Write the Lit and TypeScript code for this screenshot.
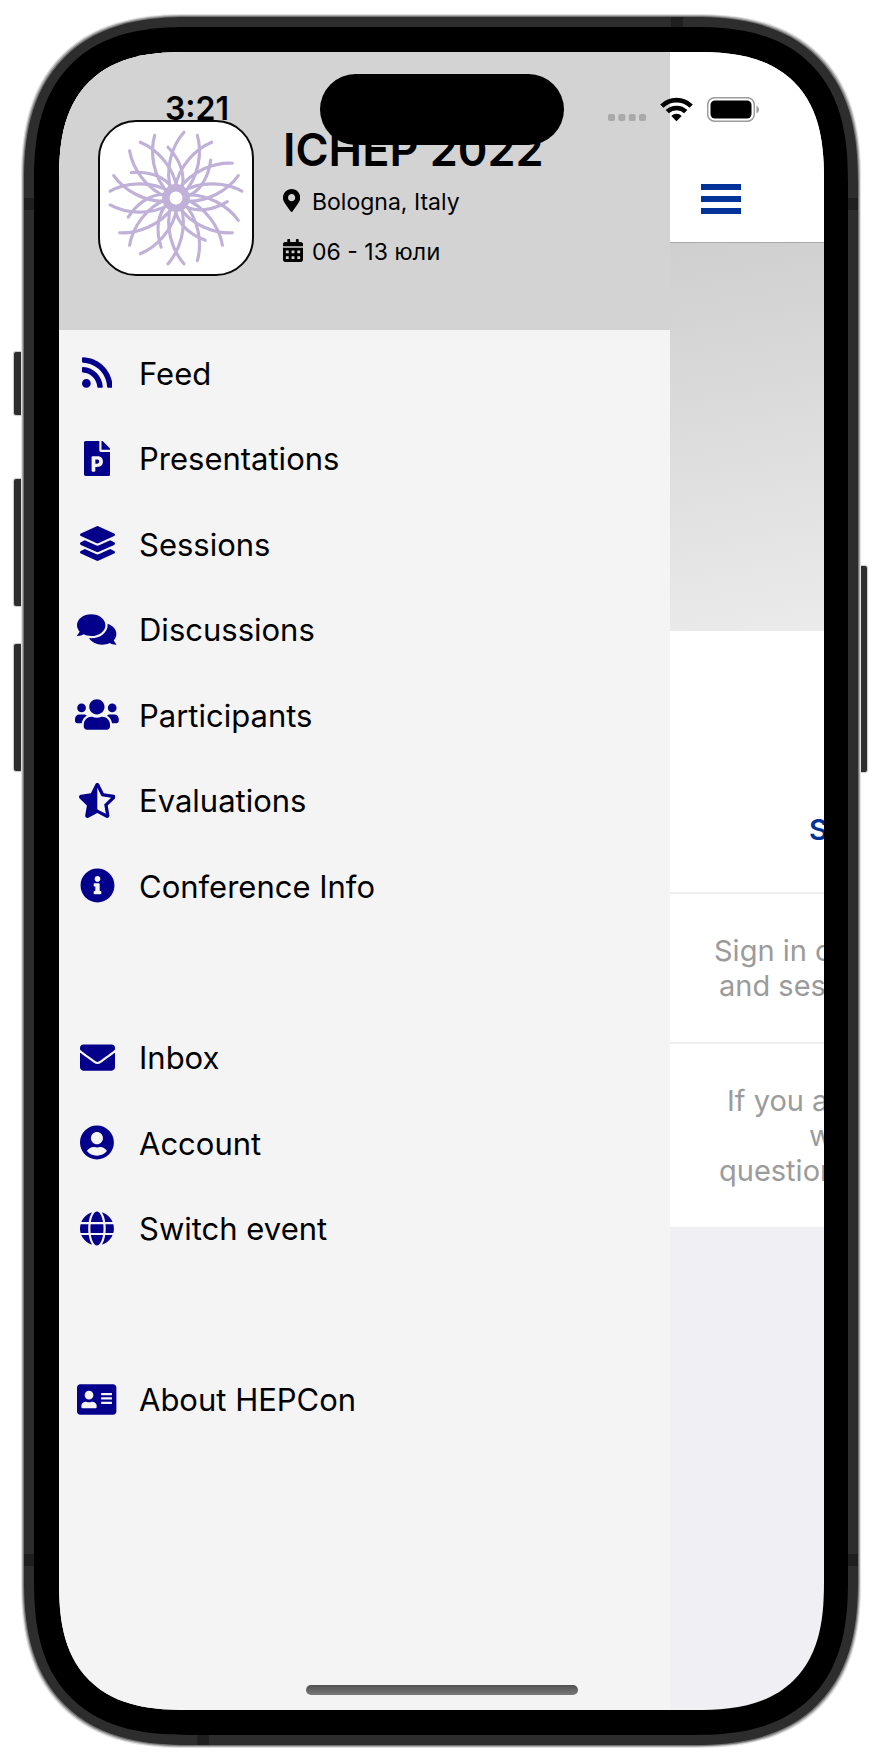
import { LitElement, html, css, svg } from "lit";
import { customElement } from "lit/decorators.js";

interface Icon {
  width: number;
  path: string;
}

const icons: Record<string, Icon> = {
  rss: {
    width: 448,
    path: "M128.081 415.959c0 35.369-28.672 64.041-64.041 64.041S0 451.328 0 415.959s28.672-64.041 64.041-64.041 64.04 28.673 64.04 64.041zm175.66 47.25c-8.354-154.6-132.185-278.587-286.95-286.95C7.656 175.765 0 183.105 0 192.253v48.069c0 8.415 6.49 15.472 14.887 16.018 111.832 7.284 201.473 96.702 208.772 208.772.547 8.397 7.604 14.887 16.018 14.887h48.069c9.149.001 16.489-7.655 15.995-16.79zm144.249.288C439.596 229.677 251.465 40.445 16.503 32.01 7.473 31.686 0 38.981 0 48.016v48.068c0 8.625 6.835 15.645 15.453 15.999 191.179 7.839 344.627 161.316 352.465 352.465.353 8.618 7.373 15.453 15.999 15.453h48.068c9.034-.001 16.329-7.474 16.005-16.504z",
  },
  slides: {
    width: 384,
    path: "M193.7 271.2c8.8 0 15.5 2.7 20.3 8.1 9.6 10.9 9.8 32.7-.2 44.1-4.9 5.6-11.9 8.5-21.1 8.5h-26.9v-60.7h27.9zM377 105L279 7c-4.5-4.5-10.6-7-17-7h-6v128h128v-6.1c0-6.3-2.5-12.4-7-16.9zm-153 31V0H24C10.7 0 0 10.7 0 24v464c0 13.3 10.7 24 24 24h336c13.3 0 24-10.7 24-24V160H248c-13.2 0-24-10.8-24-24zm53 165.2c0 90.3-88.8 77.6-111.1 77.6V436c0 6.6-5.4 12-12 12h-30.8c-6.6 0-12-5.4-12-12V236.2c0-6.6 5.4-12 12-12h81c44.5 0 72.9 32.8 72.9 77z",
  },
  layers: {
    width: 512,
    path: "M12.41 148.02l232.94 105.67c6.8 3.09 14.49 3.09 21.29 0l232.94-105.67c16.55-7.51 16.55-32.52 0-40.03L266.65 2.31a25.607 25.607 0 0 0-21.29 0L12.41 107.98c-16.55 7.51-16.55 32.53 0 40.04zm487.18 88.28l-58.09-26.33-161.64 73.27c-7.56 3.43-15.59 5.17-23.86 5.17s-16.29-1.74-23.86-5.17L70.51 209.97l-58.1 26.33c-16.55 7.5-16.55 32.5 0 40l232.94 105.59c6.8 3.08 14.49 3.08 21.29 0L499.59 276.3c16.55-7.5 16.55-32.5 0-40zm0 127.8l-57.87-26.23-161.86 73.37c-7.56 3.43-15.59 5.17-23.86 5.17s-16.29-1.74-23.86-5.17L70.29 337.87 12.41 364.1c-16.55 7.5-16.55 32.5 0 40l232.94 105.59c6.8 3.08 14.49 3.08 21.29 0L499.59 404.1c16.55-7.5 16.55-32.5 0-40z",
  },
  comments: {
    width: 576,
    path: "M416 192c0-88.4-93.1-160-208-160S0 103.6 0 192c0 34.3 14.1 65.9 38 92-13.4 30.2-35.5 54.2-35.8 54.5-2.2 2.3-2.8 5.7-1.5 8.7S4.8 352 8 352c36.6 0 66.9-12.3 88.7-25 32.2 15.7 70.3 25 111.3 25 114.9 0 208-71.6 208-160zm122 220c23.9-26 38-57.7 38-92 0-66.9-53.5-124.2-129.3-148.1.9 6.6 1.3 13.3 1.3 20.1 0 105.9-107.7 192-240 192-10.8 0-21.3-.8-31.7-1.9C207.8 439.6 281.8 480 368 480c41 0 79.1-9.2 111.3-25 21.8 12.7 52.1 25 88.7 25 3.2 0 6.1-1.9 7.3-4.8 1.3-2.9.7-6.3-1.5-8.7-.3-.3-22.4-24.2-35.8-54.5z",
  },
  users: {
    width: 640,
    path: "M96 224c35.3 0 64-28.7 64-64s-28.7-64-64-64-64 28.7-64 64 28.7 64 64 64zm448 0c35.3 0 64-28.7 64-64s-28.7-64-64-64-64 28.7-64 64 28.7 64 64 64zm32 32h-64c-17.6 0-33.5 7.1-45.1 18.6 40.3 22.1 68.9 62 75.1 109.4h66c17.7 0 32-14.3 32-32v-32c0-35.3-28.7-64-64-64zm-256 0c61.9 0 112-50.1 112-112S381.9 32 320 32 208 82.1 208 144s50.1 112 112 112zm76.8 32h-8.3c-20.8 10-43.9 16-68.5 16s-47.6-6-68.5-16h-8.3C179.6 288 128 339.6 128 403.2V432c0 26.5 21.5 48 48 48h288c26.5 0 48-21.5 48-48v-28.8c0-63.6-51.6-115.2-115.2-115.2zm-223.7-13.4C161.5 263.1 145.6 256 128 256H64c-35.3 0-64 28.7-64 64v32c0 17.7 14.3 32 32 32h65.9c6.3-47.4 34.9-87.3 75.2-109.4z",
  },
  star: {
    width: 536,
    path: "M508.55 171.51L362.18 150.2 296.77 17.81C290.89 5.98 279.42 0 267.95 0c-11.4 0-22.79 5.9-28.69 17.81l-65.43 132.38-146.38 21.29c-26.25 3.8-36.77 36.09-17.74 54.59l105.89 103-25.06 145.48C86.98 495.33 103.57 512 122.15 512c4.93 0 10-1.17 14.87-3.75l130.95-68.68 130.94 68.7c4.86 2.55 9.92 3.71 14.83 3.71 18.6 0 35.22-16.61 31.66-37.4l-25.03-145.49 105.91-102.98c19.04-18.5 8.52-50.8-17.73-54.6zm-121.74 123.2l-18.12 17.62 4.28 24.88 19.52 113.45-102.13-53.59-22.38-11.74.03-317.19 51.03 103.29 11.18 22.63 25.01 3.64 114.23 16.63-82.65 80.38z",
  },
  info: {
    width: 512,
    path: "M256 8C119.043 8 8 119.083 8 256c0 136.997 111.043 248 248 248s248-111.003 248-248C504 119.083 392.957 8 256 8zm0 110c23.196 0 42 18.804 42 42s-18.804 42-42 42-42-18.804-42-42 18.804-42 42-42zm56 254c0 6.627-5.373 12-12 12h-88c-6.627 0-12-5.373-12-12v-24c0-6.627 5.373-12 12-12h12v-64h-12c-6.627 0-12-5.373-12-12v-24c0-6.627 5.373-12 12-12h64c6.627 0 12 5.373 12 12v100h12c6.627 0 12 5.373 12 12v24z",
  },
  envelope: {
    width: 512,
    path: "M502.3 190.8c3.9-3.1 9.7-.2 9.7 4.7V400c0 26.5-21.5 48-48 48H48c-26.5 0-48-21.5-48-48V195.6c0-5 5.7-7.8 9.7-4.7 22.4 17.4 52.1 39.5 154.1 113.6 21.1 15.4 56.7 47.8 92.2 47.6 35.7.3 72-32.8 92.3-47.6 102-74.1 131.6-96.3 154-113.7zM256 320c23.2.4 56.6-29.2 73.4-41.4 132.7-96.3 142.8-104.7 173.4-128.7 5.8-4.5 9.2-11.5 9.2-18.9v-19c0-26.5-21.5-48-48-48H48c-26.5 0-48 21.5-48 48v19c0 7.4 3.4 14.3 9.2 18.9 30.6 23.9 40.7 32.4 173.4 128.7 16.8 12.2 50.2 41.8 73.4 41.4z",
  },
  account: {
    width: 496,
    path: "M248 8C111 8 0 119 0 256s111 248 248 248 248-111 248-248S385 8 248 8zm0 96c48.6 0 88 39.4 88 88s-39.4 88-88 88-88-39.4-88-88 39.4-88 88-88zm0 344c-58.7 0-111.3-26.6-146.5-68.2 18.8-35.4 55.6-59.8 98.5-59.8 2.4 0 4.8.4 7.1 1.1 13 4.2 26.6 6.9 40.9 6.9 14.3 0 28-2.7 40.9-6.9 2.3-.7 4.7-1.1 7.1-1.1 42.9 0 79.7 24.4 98.5 59.8C359.3 421.4 306.7 448 248 448z",
  },
  globe: {
    width: 496,
    path: "M336.5 160C322 70.7 287.8 8 248 8s-74 62.7-88.5 152h177zM152 256c0 22.2 1.2 43.5 3.3 64h185.3c2.1-20.5 3.3-41.8 3.3-64s-1.2-43.5-3.3-64H155.3c-2.1 20.5-3.3 41.8-3.3 64zm324.7-96c-28.6-67.9-86.5-120.4-158-141.6 24.4 33.8 41.2 84.7 50 141.6h108zM177.2 18.4C105.8 39.6 47.8 92.1 19.3 160h108c8.7-56.9 25.5-107.8 49.9-141.6zM487.4 192H372.7c2.1 21 3.3 42.5 3.3 64s-1.2 43-3.3 64h114.6c5.5-20.5 8.6-41.8 8.6-64s-3.1-43.5-8.5-64zM120 256c0-21.5 1.2-43 3.3-64H8.6C3.2 212.5 0 233.8 0 256s3.2 43.5 8.6 64h114.6c-2-21-3.2-42.5-3.2-64zm39.5 96c14.5 89.3 48.7 152 88.5 152s74-62.7 88.5-152h-177zm159.3 141.6c71.4-21.2 129.4-73.7 158-141.6h-108c-8.8 56.9-25.6 107.8-50 141.6zM19.3 352c28.6 67.9 86.5 120.4 158 141.6-24.4-33.8-41.2-84.7-50-141.6h-108z",
  },
  card: {
    width: 576,
    path: "M528 32H48C21.5 32 0 53.5 0 80v352c0 26.5 21.5 48 48 48h480c26.5 0 48-21.5 48-48V80c0-26.5-21.5-48-48-48zm-352 96c35.3 0 64 28.7 64 64s-28.7 64-64 64-64-28.7-64-64 28.7-64 64-64zm112 236.8c0 10.6-10 19.2-22.4 19.2H86.4C74 384 64 375.4 64 364.8v-19.2c0-31.8 30.1-57.6 67.2-57.6h5c12.3 5.1 25.7 8 39.8 8s27.6-2.9 39.8-8h5c37.1 0 67.2 25.8 67.2 57.6v19.2zM512 312c0 4.4-3.6 8-8 8H360c-4.4 0-8-3.6-8-8v-16c0-4.4 3.6-8 8-8h144c4.4 0 8 3.6 8 8v16zm0-64c0 4.4-3.6 8-8 8H360c-4.4 0-8-3.6-8-8v-16c0-4.4 3.6-8 8-8h144c4.4 0 8 3.6 8 8v16zm0-64c0 4.4-3.6 8-8 8H360c-4.4 0-8-3.6-8-8v-16c0-4.4 3.6-8 8-8h144c4.4 0 8 3.6 8 8v16z",
  },
  pin: {
    width: 384,
    path: "M172.268 501.67C26.97 291.031 0 269.413 0 192 0 85.961 85.961 0 192 0s192 85.961 192 192c0 77.413-26.97 99.031-172.268 309.67-9.535 13.774-29.93 13.773-39.464 0zM192 272c44.183 0 80-35.817 80-80s-35.817-80-80-80-80 35.817-80 80 35.817 80 80 80z",
  },
  calendar: {
    width: 448,
    path: "M0 464c0 26.500 21.500 48 48 48h352c26.500 0 48-21.500 48-48V192H0zM64 256h64v64H64zM192 256h64v64h-64zM320 256h64v64h-64zM64 384h64v64H64zM192 384h64v64h-64zM320 384h64v64h-64zM448 160v-48c0-26.500-21.500-48-48-48h-48V16c0-8.800-7.200-16-16-16h-32c-8.800 0-16 7.200-16 16v48H160V16c0-8.800-7.200-16-16-16h-32c-8.800 0-16 7.200-16 16v48H48C21.500 64 0 85.500 0 112v48z",
  },
};

const drawIcon = (name: string) => {
  const icon = icons[name];
  return html`<svg class="icon" viewBox="0 0 ${icon.width} 512" aria-hidden="true">
    <path fill-rule="evenodd" d=${icon.path} />
  </svg>`;
};

const menuGroups: { icon: string; label: string }[][] = [
  [
    { icon: "rss", label: "Feed" },
    { icon: "slides", label: "Presentations" },
    { icon: "layers", label: "Sessions" },
    { icon: "comments", label: "Discussions" },
    { icon: "users", label: "Participants" },
    { icon: "star", label: "Evaluations" },
    { icon: "info", label: "Conference Info" },
  ],
  [
    { icon: "envelope", label: "Inbox" },
    { icon: "account", label: "Account" },
    { icon: "globe", label: "Switch event" },
  ],
  [{ icon: "card", label: "About HEPCon" }],
];

// Fourteen pairs of tracks around the centre; every second inner track is short.
const tracks = Array.from({ length: 14 }, (_, i) => {
  const angle = (i * 360) / 14;
  const inner =
    i % 2 === 0
      ? "M-24-153C8-120 34-70 14-20"
      : "M-24-198C10-160 36-90 14-20";
  return svg`<g transform="rotate(${angle})">
    <path d="M24-198C-10-160-36-90-14-20" />
    <path d=${inner} />
  </g>`;
});

@customElement("app-root")
export class AppRoot extends LitElement {
  static styles = css`
    :host {
      display: flex;
      isolation: isolate;
      box-sizing: border-box;
      min-height: 100vh;
      padding: 17px 24px 7px;
      background: #fff;
      color: #000;
      font-family: Inter, Roboto, sans-serif;
    }
    * {
      box-sizing: border-box;
    }
    .device {
      position: relative;
      flex: 1;
      min-width: 0;
      display: flex;
      padding: 10px;
      background: #2d2d2d;
      border-radius: 135px;
      box-shadow: 0 0 0 1px #747474, 0 0 0 2px #ababab, 0 0 0 3px #e0e0e0;
    }
    .bezel {
      position: relative;
      flex: 1;
      min-width: 0;
      display: flex;
      padding: 25px 24px 25px 25px;
      background: #000;
      border-radius: 126px;
    }
    .screen {
      position: relative;
      flex: 1;
      min-width: 0;
      display: flex;
      overflow: hidden;
      background: #efeff4;
      border-radius: 102px;
    }
    @supports (corner-shape: superellipse(1.4)) {
      .device {
        border-radius: 165px;
        corner-shape: superellipse(1.3);
      }
      .bezel {
        border-radius: 155px;
        corner-shape: superellipse(1.34);
      }
      .screen {
        border-radius: 130px;
        corner-shape: superellipse(1.4);
      }
    }

    /* side keys and antenna bands of the phone */
    .key {
      position: absolute;
      width: 12px;
      background: #2d2d2d;
      border-radius: 2px;
      box-shadow: 0 0 1px 1px #c8c8c8;
      z-index: -1;
    }
    .key.left {
      left: -10px;
    }
    .key.right {
      right: -9px;
      top: 549px;
      height: 206px;
    }
    .key.action {
      top: 335px;
      height: 63px;
    }
    .key.up {
      top: 462px;
      height: 127px;
    }
    .key.down {
      top: 627px;
      height: 127px;
    }
    .band {
      position: absolute;
      width: 10px;
      height: 12px;
      background: #1f1f1f;
    }
    .band.west {
      left: 0;
    }
    .band.east {
      right: 0;
    }
    .band.high {
      top: 181px;
    }
    .band.low {
      bottom: 179px;
    }
    .band.north {
      top: 0;
      right: 175px;
      width: 12px;
      height: 10px;
    }
    .band.south {
      bottom: 0;
      left: 173px;
      width: 12px;
      height: 10px;
    }

    .status {
      position: absolute;
      inset: 0 0 auto;
      z-index: 1;
      height: 114px;
      padding: 0 64px 0 106px;
      display: flex;
      align-items: center;
      justify-content: space-between;
      pointer-events: none;
    }
    .clock {
      font-size: 32px;
      line-height: 38px;
      font-weight: 600;
    }
    .signals {
      display: flex;
      align-items: center;
      gap: 14px;
    }
    .signals svg {
      display: block;
    }
    .island {
      position: absolute;
      z-index: 3;
      top: 22px;
      left: 50%;
      width: 244px;
      height: 71px;
      margin-left: -122px;
      border-radius: 36px;
      background: #000;
    }
    .home {
      position: absolute;
      z-index: 3;
      bottom: 15px;
      left: 50%;
      width: 272px;
      height: 10px;
      margin-left: -136px;
      border-radius: 5px;
      background: linear-gradient(#505050, #7a7a7a);
    }

    .drawer {
      flex: 0 0 calc(80% - 1px);
      min-width: 0;
      display: flex;
      flex-direction: column;
      background: #f4f4f4;
    }
    .event {
      display: flex;
      gap: 29px;
      padding: 68px 20px 53px 39px;
      background: #d3d3d3;
    }
    .logo {
      position: relative;
      z-index: 2;
      flex: none;
      width: 156px;
      height: 156px;
      border: 2px solid #0a0a0a;
      border-radius: 38px;
      background: #fff;
    }
    .logo svg {
      display: block;
      width: 100%;
      height: 100%;
    }
    .facts {
      padding-top: 2px;
      min-width: 0;
    }
    h1 {
      margin: 0;
      font-size: 45px;
      line-height: 56px;
      font-weight: 600;
      white-space: nowrap;
    }
    .fact {
      margin: 0;
      display: flex;
      align-items: center;
      gap: 9px;
      font-size: 23px;
      line-height: 49px;
    }
    .fact .mark {
      width: 20px;
      display: flex;
      padding-bottom: 4px;
    }
    .month {
      font-family: "Noto Sans", Inter, sans-serif;
    }
    .icon {
      display: block;
      height: 35px;
      fill: currentColor;
    }
    .fact .icon {
      height: 23px;
    }

    nav {
      flex: 1;
      padding-bottom: 268px;
      display: flex;
    }
    .menu {
      flex: 1;
      margin: 0;
      padding: 0;
      list-style: none;
      display: grid;
      grid-auto-rows: 1fr;
    }
    .item {
      height: 100%;
      display: flex;
      align-items: center;
      gap: 20px;
      padding: 2px 0 0 16px;
      color: #000;
      text-decoration: none;
      font-size: 31px;
      line-height: 38px;
    }
    .slot {
      width: 44px;
      display: flex;
      justify-content: center;
      padding-bottom: 2px;
      color: #04008c;
    }

    .page {
      flex: 1;
      min-width: 0;
      overflow: hidden;
      white-space: nowrap;
    }
    .bar {
      height: 191px;
      padding: 132px 0 0 31px;
      background: #fff;
      border-bottom: 1px solid #a9a9a9;
    }
    .burger {
      display: flex;
      flex-direction: column;
      gap: 6px;
      width: 40px;
      padding: 0;
      border: 0;
      background: none;
    }
    .burger span {
      height: 6px;
      background: #003399;
    }
    .banner {
      height: 388px;
      background: linear-gradient(170deg, #cfcfcf, #ebebeb);
    }
    .panel {
      padding: 39px 0;
      background: #fff;
      border-bottom: 2px solid #efeff4;
      color: #9b9b9b;
      font-size: 29px;
      line-height: 35px;
    }
    .panel p {
      margin: 0;
    }
    .panel.sign {
      padding-top: 181px;
      padding-bottom: 45px;
      color: #003399;
      font-weight: 600;
    }
    .panel span {
      display: block;
    }
    .wide {
      padding-left: 44px;
    }
    .mid {
      padding-left: 49px;
    }
    .inner {
      padding-left: 57px;
    }
    .far {
      padding-left: 139px;
    }
  `;

  render() {
    return html`
      <div class="device">
        <i class="key left action"></i>
        <i class="key left up"></i>
        <i class="key left down"></i>
        <i class="key right"></i>
        <i class="band west high"></i>
        <i class="band west low"></i>
        <i class="band east high"></i>
        <i class="band east low"></i>
        <i class="band north"></i>
        <i class="band south"></i>
        <div class="bezel">
          <main class="screen">
            ${this.renderDrawer()} ${this.renderPage()} ${this.renderStatus()}
            <div class="island"></div>
            <div class="home"></div>
          </main>
        </div>
      </div>
    `;
  }

  private renderDrawer() {
    return html`
      <aside class="drawer">
        <header class="event">
          <div class="logo">
            <svg viewBox="-229 -229 458 458" aria-hidden="true">
              <g fill="none" stroke="#c0b1d8" stroke-width="9.500" stroke-linecap="round">
                ${tracks}
                <circle r="31" stroke-width="22" />
              </g>
            </svg>
          </div>
          <div class="facts">
            <h1>ICHEP 2022</h1>
            <p class="fact"><span class="mark">${drawIcon("pin")}</span>Bologna, Italy</p>
            <p class="fact">
              <span class="mark">${drawIcon("calendar")}</span
              ><span>06 - 13 <span class="month" lang="bg">юли</span></span>
            </p>
          </div>
        </header>
        <nav aria-label="Main">
          <ul class="menu">
            ${menuGroups.map(
              (group, i) => html`
                ${i > 0 ? html`<li role="separator"></li>` : ""}
                ${group.map(
                  (entry) => html`<li>
                    <a class="item" href="#"
                      ><span class="slot">${drawIcon(entry.icon)}</span>${entry.label}</a
                    >
                  </li>`
                )}
              `
            )}
          </ul>
        </nav>
      </aside>
    `;
  }

  private renderPage() {
    return html`
      <section class="page">
        <div class="bar">
          <button class="burger" aria-label="Menu"><span></span><span></span><span></span></button>
        </div>
        <div class="banner"></div>
        <div class="panel sign"><p class="far">S</p></div>
        <div class="panel">
          <p><span class="wide">Sign in o</span><span class="mid">and ses</span></p>
        </div>
        <div class="panel">
          <p>
            <span class="inner">If you a</span><span class="far">w</span
            ><span class="mid">question</span>
          </p>
        </div>
      </section>
    `;
  }

  private renderStatus() {
    return html`
      <div class="status">
        <time class="clock">3:21</time>
        <div class="signals">
          <svg width="38" height="25" viewBox="0 0 38 25" fill="#a9a9a9" aria-hidden="true">
            <rect x="0" y="17" width="7" height="7" rx="2" />
            <rect x="10.400" y="17" width="7" height="7" rx="2" />
            <rect x="20.700" y="17" width="7" height="7" rx="2" />
            <rect x="31" y="17" width="7" height="7" rx="2" />
          </svg>
          <svg width="33" height="25" viewBox="0 0 33 25" aria-hidden="true">
            <g fill="none" stroke="#000" stroke-width="4.600">
              <path d="M1.800 9.100a21 21 0 0 1 29.400 0" />
              <path d="M7.300 14.700a13.200 13.200 0 0 1 18.400 0" />
            </g>
            <path d="M16.500 24.200l-5.200-5.200a7.400 7.400 0 0 1 10.400 0z" />
          </svg>
          <svg width="53" height="25" viewBox="0 0 53 25" aria-hidden="true">
            <rect x=".7" y=".7" width="46.600" height="23.600" rx="7" fill="#fff" stroke="#9c9c9c" stroke-width="1.500" />
            <rect x="3.500" y="3.500" width="41" height="18" rx="4.500" />
            <path d="M49.500 8.500a4.500 4.500 0 0 1 0 8z" fill="#9c9c9c" />
          </svg>
        </div>
      </div>
    `;
  }
}
